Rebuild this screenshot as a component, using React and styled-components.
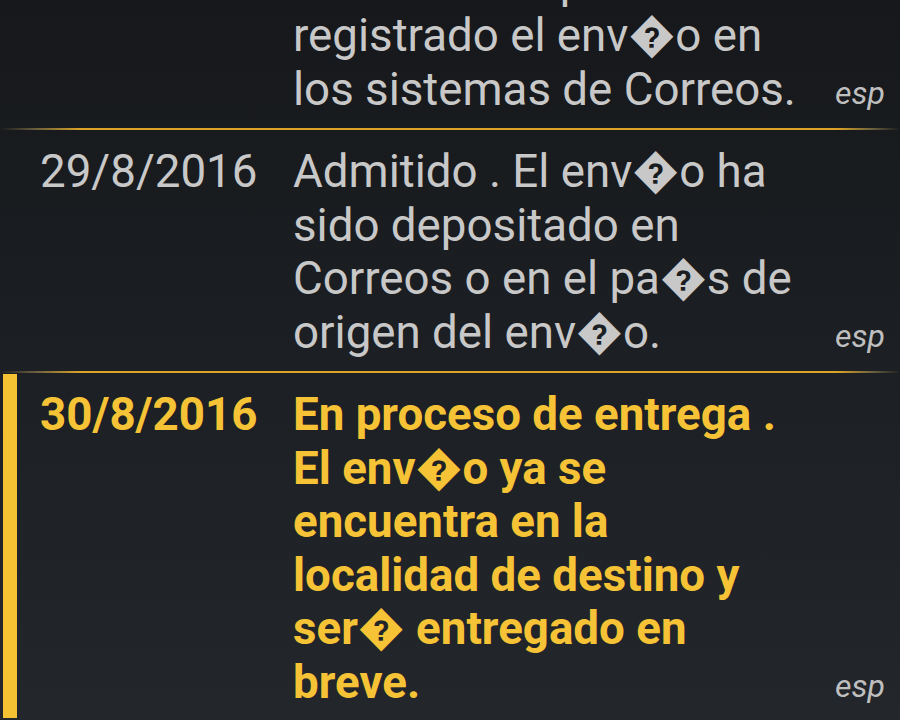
import React from "react";
import styled, { createGlobalStyle } from "styled-components";

const GlobalStyle = createGlobalStyle`
  html, body { margin: 0; padding: 0; }
  body {
    background: #1b1e22;
    font-family: Roboto, "DejaVu Sans", sans-serif;
    overflow: hidden;
  }
`;

const Screen = styled.div`
  width: 900px;
  height: 720px;
  overflow: hidden;
  background: linear-gradient(180deg, #16181b 0%, #1c1f23 50%, #23272b 100%);
`;

const List = styled.div`
  display: flex;
  flex-direction: column;
  margin-top: ${(p) => -p.$scroll}px;
`;

const Row = styled.div`
  display: grid;
  grid-template-columns: 253px 1fr auto;
  padding: 15px 15px 12px 40px;
  color: ${(p) => (p.$active ? "#f6c336" : "#c8c8c8")};
  font-weight: ${(p) => (p.$active ? 700 : 400)};
  background: ${(p) =>
    p.$active
      ? "linear-gradient(#f4c232, #f4c232) no-repeat 3px 1px / 14px calc(100% - 4px)"
      : "none"};
`;

const DateCell = styled.div`
  font-size: 45.7px;
  line-height: 53.5px;
`;

const Message = styled.div`
  font-size: 45.7px;
  line-height: 53.5px;
  padding-right: 36px;
`;

const Lang = styled.div`
  align-self: end;
  font-size: 32px;
  line-height: 45px;
  font-style: italic;
  font-weight: 400;
  color: #bfbfbf;
`;

const Divider = styled.div`
  height: 2px;
  background: linear-gradient(
    90deg,
    rgba(120, 110, 80, 0) 0%,
    rgba(160, 140, 80, 0.6) 4%,
    #dca426 9%,
    #dca426 93%,
    rgba(160, 140, 80, 0.6) 97%,
    rgba(120, 110, 80, 0) 100%
  );
`;

const events = [
  {
    date: "26/8/2016",
    text: "Pre-registrado . El remitente ha pre-registrado el env\uFFFDo en los sistemas de Correos.",
  },
  {
    date: "29/8/2016",
    text: "Admitido . El env\uFFFDo ha sido depositado en Correos o en el pa\uFFFDs de origen del env\uFFFDo.",
  },
  {
    date: "30/8/2016",
    text: "En proceso de entrega . El env\uFFFDo ya se encuentra en la localidad de destino y ser\uFFFD entregado en breve.",
    active: true,
  },
];

export default function App() {
  return (
    <>
      <GlobalStyle />
      <Screen>
        <List $scroll={113}>
          {events.map((e, i) => (
            <React.Fragment key={e.date}>
              {i > 0 && <Divider />}
              <Row $active={e.active}>
                <DateCell>{e.date}</DateCell>
                <Message>{e.text}</Message>
                <Lang>esp</Lang>
              </Row>
            </React.Fragment>
          ))}
        </List>
      </Screen>
    </>
  );
}
